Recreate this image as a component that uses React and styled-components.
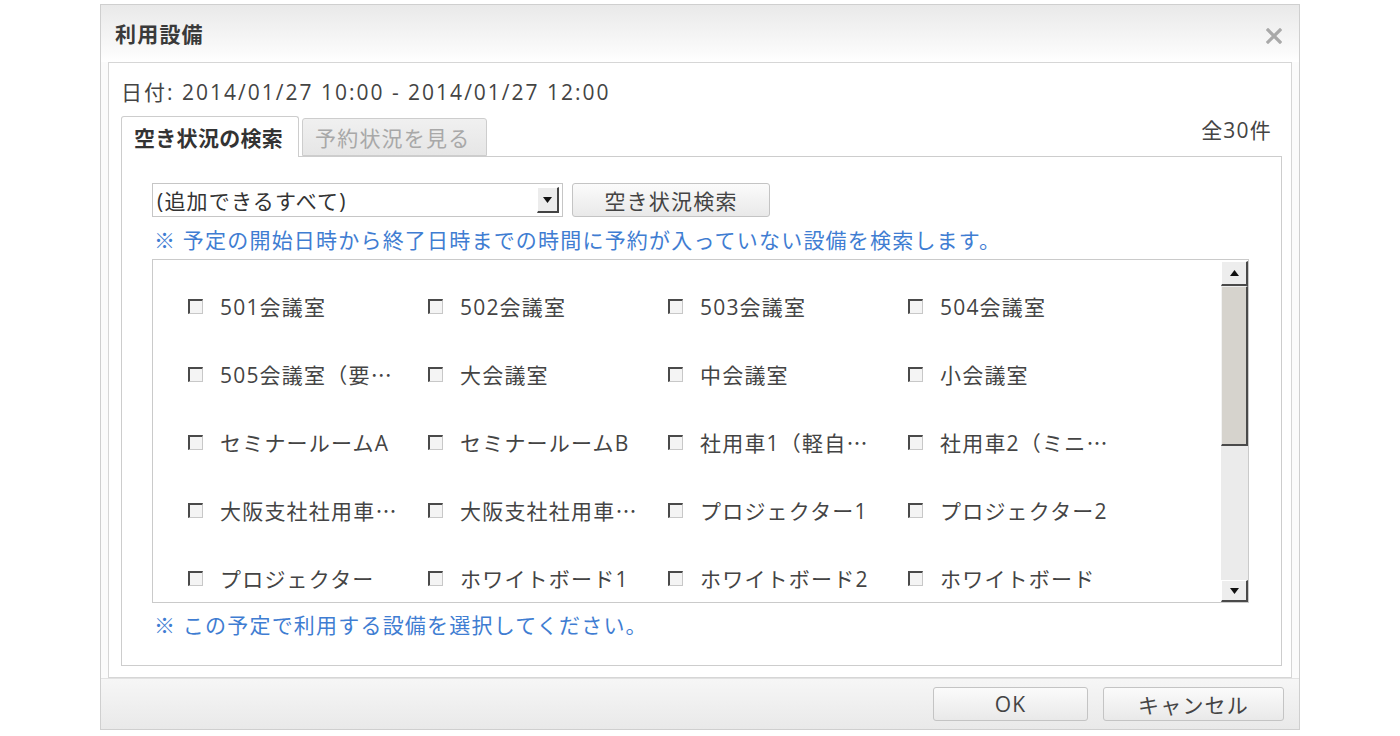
import React from "react";
import styled, { createGlobalStyle } from "styled-components";

const Global = createGlobalStyle`
  html, body { margin: 0; padding: 0; background: #fff; }
  body {
    font-family: "Open Sans", "Noto Sans CJK JP", sans-serif;
    font-size: 21px;
    letter-spacing: 1.2px;
    color: #444;
  }
  * { box-sizing: border-box; }
`;

const Dialog = styled.div`
  margin: 4px 0 0 100px;
  width: 1200px;
  height: 726px;
  border: 1px solid #cfcfcf;
  display: flex;
  flex-direction: column;
  background: #f7f7f7;
`;

const TitleBar = styled.div`
  height: 57px;
  flex: none;
  display: flex;
  align-items: center;
  justify-content: space-between;
  padding: 0 17px 0 14px;
  background: linear-gradient(#e9e9e9, #fbfbfb 85%, #ffffff);
`;

const Title = styled.div`
  font-family: "Noto Sans CJK JP", sans-serif;
  font-weight: 700;
  color: #3a3a3a;
  line-height: 28px;
  margin-top: -2px;
`;

const CloseBtn = styled.div`
  width: 16px;
  height: 16px;
  margin-top: 4px;
  display: flex;
`;

const Body = styled.div`
  flex: none;
  height: 616px;
  padding: 0 7px;
  background: #fbfbfb;
`;

const ContentBox = styled.div`
  height: 100%;
  border: 1px solid #d6d6d6;
  background: #fff;
  padding: 15px 9px 0 12px;
  display: flex;
  flex-direction: column;
`;

const DateLine = styled.div`
  line-height: 28px;
  color: #444;
  white-space: nowrap;
  letter-spacing: 2px;
`;

const TabRow = styled.div`
  margin-top: 10px;
  height: 40px;
  display: flex;
  align-items: flex-end;
  justify-content: space-between;
  padding-right: 10px;
`;

const Tabs = styled.div`
  display: flex;
  align-items: flex-end;
  gap: 3px;
  height: 100%;
`;

const Tab = styled.div`
  height: ${(p) => (p.$active ? "41px" : "38px")};
  margin-bottom: ${(p) => (p.$active ? "-1px" : "0")};
  width: ${(p) => p.$w}px;
  padding: 0 0 0 12px;
  display: flex;
  align-items: center;
  white-space: nowrap;
  letter-spacing: ${(p) => (p.$active ? "0.3px" : "1.2px")};
  border: 1px solid #cdcdcd;
  border-bottom: ${(p) => (p.$active ? "none" : "1px solid #cdcdcd")};
  border-radius: 3px 3px 0 0;
  background: ${(p) => (p.$active ? "#fff" : "linear-gradient(#f0f0f0, #e6e6e6)")};
  color: ${(p) => (p.$active ? "#333" : "#a8a8a8")};
  font-weight: ${(p) => (p.$active ? 700 : 400)};
  position: relative;
  z-index: 1;
`;

const Count = styled.div`
  line-height: 28px;
  align-self: flex-start;
  color: #444;
`;

const Panel = styled.div`
  flex: none;
  height: 510px;
  border: 1px solid #cdcdcd;
  padding: 26px 0 0 30px;
  display: flex;
  flex-direction: column;
`;

const SearchRow = styled.div`
  display: flex;
  gap: 9px;
  height: 34px;
`;

const Select = styled.div`
  width: 411px;
  height: 34px;
  border: 1px solid #c6c6c6;
  background: #fff;
  display: flex;
  align-items: center;
  justify-content: space-between;
  padding: 0 3px 0 4px;
  color: #333;
`;

const SelectArrow = styled.div`
  width: 22px;
  height: 26px;
  background: #ececec;
  border-top: 1px solid #fff;
  border-left: 1px solid #fff;
  border-right: 2px solid #444;
  border-bottom: 2px solid #444;
  display: flex;
  align-items: center;
  justify-content: center;
`;

const Button = styled.div`
  width: ${(p) => p.$w}px;
  height: 34px;
  border: 1px solid #c4c4c4;
  border-radius: 3px;
  background: linear-gradient(#fbfbfb, #e9e9e9);
  display: flex;
  align-items: center;
  justify-content: center;
  color: #444;
`;

const Hint = styled.div`
  color: #3f7dd2;
  line-height: 26px;
  margin-top: ${(p) => p.$mt}px;
  padding-left: 2px;
  white-space: nowrap;
`;

const ListBox = styled.div`
  margin-top: 6px;
  width: 1097px;
  height: 344px;
  border: 1px solid #cacaca;
  display: flex;
`;

const Grid = styled.div`
  flex: 1;
  overflow: hidden;
  padding: 12px 0 0 35px;
  display: grid;
  grid-template-columns: repeat(4, 240px);
  grid-auto-rows: 68px;
  align-content: start;
`;

const Item = styled.label`
  display: flex;
  align-items: center;
  color: #444;
  white-space: nowrap;
`;

const Ellip = styled.span`
  font-family: "Noto Sans CJK JP", sans-serif;
  letter-spacing: 0;
`;

const Box = styled.span`
  width: 15px;
  height: 15px;
  flex: none;
  border-top: 2px solid #4a4a4a;
  border-left: 2px solid #4a4a4a;
  border-right: 1px solid #c8c8c8;
  border-bottom: 1px solid #c8c8c8;
  background: #f4f4f4;
  margin-right: 17px;
  margin-top: 1px;
`;

const Scrollbar = styled.div`
  width: 27px;
  flex: none;
  margin-top: 1px;
  display: flex;
  flex-direction: column;
  background: #ebebeb;
`;

const ScrollBtn = styled.div`
  height: ${(p) => p.$h}px;
  flex: none;
  background: #ededed;
  border-top: 1px solid #fff;
  border-left: 1px solid #fff;
  border-right: 2px solid #4a4a4a;
  border-bottom: 2px solid #4a4a4a;
  display: flex;
  align-items: center;
  justify-content: center;
`;

const Thumb = styled.div`
  height: 160px;
  flex: none;
  background: #d6d3cd;
  border-top: 1px solid #eee;
  border-left: 1px solid #f2f2f2;
  border-right: 2px solid #4a4a4a;
  border-bottom: 2px solid #4a4a4a;
`;

const Track = styled.div`
  flex: 1;
  background: #ebebeb;
`;

const Footer = styled.div`
  flex: 1;
  display: flex;
  align-items: center;
  justify-content: flex-end;
  gap: 15px;
  padding: 0 15px 1px 0;
  border-top: 1px solid #e2e2e2;
  background: linear-gradient(#f6f6f6, #e9e9e9);
`;

const items = [
  ["501会議室"], ["502会議室"], ["503会議室"], ["504会議室"],
  ["505会議室（要", true], ["大会議室"], ["中会議室"], ["小会議室"],
  ["セミナールームA"], ["セミナールームB"], ["社用車1（軽自", true], ["社用車2（ミニ", true],
  ["大阪支社社用車", true], ["大阪支社社用車", true], ["プロジェクター1"], ["プロジェクター2"],
  ["プロジェクター"], ["ホワイトボード1"], ["ホワイトボード2"], ["ホワイトボード"],
];

const TriUp = () => (
  <svg width="9" height="6" viewBox="0 0 9 6"><polygon points="4.5,0 9,6 0,6" fill="#111" /></svg>
);
const TriDown = () => (
  <svg width="9" height="6" viewBox="0 0 9 6"><polygon points="0,0 9,0 4.5,6" fill="#111" /></svg>
);

export default function App() {
  return (
    <>
      <Global />
      <Dialog lang="ja">
        <TitleBar>
          <Title>利用設備</Title>
          <CloseBtn>
            <svg width="16" height="16" viewBox="0 0 16 16">
              <path d="M2 2 L14 14 M14 2 L2 14" stroke="#a9a9a9" strokeWidth="3.2" strokeLinecap="square" />
            </svg>
          </CloseBtn>
        </TitleBar>
        <Body>
          <ContentBox>
            <DateLine>日付: 2014/01/27 10:00 - 2014/01/27 12:00</DateLine>
            <TabRow>
              <Tabs>
                <Tab $active $w={178}>空き状況の検索</Tab>
                <Tab $w={185}>予約状況を見る</Tab>
              </Tabs>
              <Count>全30件</Count>
            </TabRow>
            <Panel>
              <SearchRow>
                <Select>
                  <span>(追加できるすべて)</span>
                  <SelectArrow><TriDown /></SelectArrow>
                </Select>
                <Button $w={198}>空き状況検索</Button>
              </SearchRow>
              <Hint $mt={10}>※ 予定の開始日時から終了日時までの時間に予約が入っていない設備を検索します。</Hint>
              <ListBox>
                <Grid>
                  {items.map(([t, cut], i) => (
                    <Item key={i}>
                      <Box />
                      {t}
                      {cut && <Ellip>⋯</Ellip>}
                    </Item>
                  ))}
                </Grid>
                <Scrollbar>
                  <ScrollBtn $h={25}><TriUp /></ScrollBtn>
                  <Thumb />
                  <Track />
                  <ScrollBtn $h={22}><TriDown /></ScrollBtn>
                </Scrollbar>
              </ListBox>
              <Hint $mt={9}>※ この予定で利用する設備を選択してください。</Hint>
            </Panel>
          </ContentBox>
        </Body>
        <Footer>
          <Button $w={155}>OK</Button>
          <Button $w={181}>キャンセル</Button>
        </Footer>
      </Dialog>
    </>
  );
}
